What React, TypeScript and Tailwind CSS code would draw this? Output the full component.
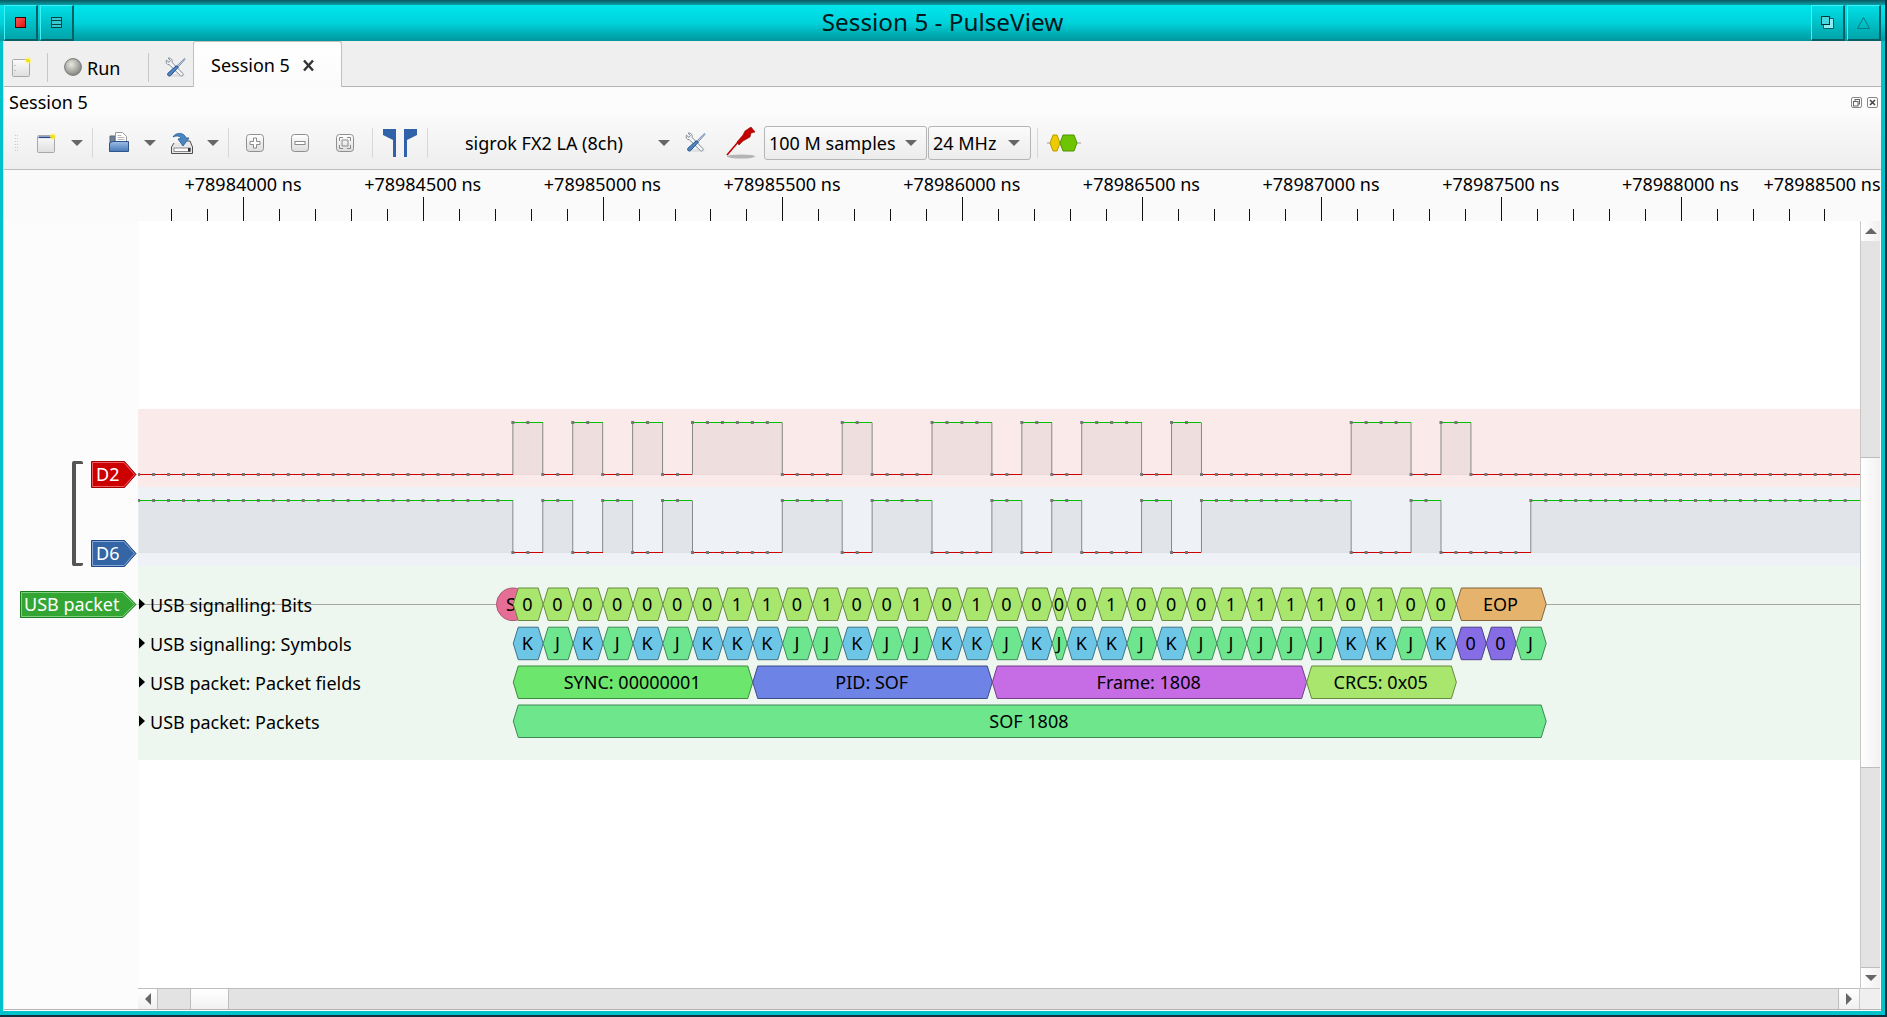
import React from "react";

// sample index -> px, one sample is 14.97px at this zoom
const sx = (k: number) => 138.6 + 14.97 * k;
const ax = (k: number) => 139 + 14.97 * k;

const d2High = [[25, 27], [29, 31], [33, 35], [37, 43], [47, 49], [53, 57], [59, 61], [63, 67], [69, 71], [81, 85], [87, 89]];
const d6High = [[0, 25], [27, 29], [31, 33], [35, 37], [43, 47], [49, 53], [57, 59], [61, 63], [67, 69], [71, 81], [85, 87], [93, 115]];

const bitValues = "000000011010010100" + "0" + "0100011110100";
const symValues = "KJKJKJKKKJJKJJKKJK" + "J" + "KKJKJJJJJKKJK";

function hex(x0: number, x1: number, top: number, h: number, d = 5) {
  const mid = top + h / 2;
  return `${x0},${mid} ${x0 + d},${top} ${x1 - d},${top} ${x1},${mid} ${x1 - d},${top + h} ${x0 + d},${top + h}`;
}

// bit cells are 2 samples wide, with one short cell at sample 61
function cells() {
  const out: [number, number][] = [];
  let k = 25;
  while (k < 61) {
    out.push([k, k + 2]);
    k += 2;
  }
  out.push([61, 62]);
  k = 62;
  while (k < 88) {
    out.push([k, k + 2]);
    k += 2;
  }
  return out;
}

function Signal({ highs, yHigh, yLow }: { highs: number[][]; yHigh: number; yLow: number }) {
  const isHigh = (k: number) => highs.some(([a, b]) => k >= a && k < b);
  const lows: number[][] = [];
  let prev = 0;
  highs.forEach(([a, b]) => {
    if (a > prev) lows.push([prev, a]);
    prev = b;
  });
  if (prev < 115) lows.push([prev, 115]);
  const samples = Array.from({ length: 115 }, (_, k) => k);
  return (
    <g>
      <line x1={138} x2={1860} y1={yLow} y2={yLow} stroke="#000" strokeOpacity={0.04} />
      {highs.map(([a, b]) => (
        <rect key={a} x={sx(a)} y={yHigh} width={sx(b) - sx(a)} height={yLow - yHigh} fill="#000" fillOpacity={0.05} />
      ))}
      {highs.flat().filter((k) => k > 0 && k < 115).map((k) => (
        <line key={k} x1={sx(k)} x2={sx(k)} y1={yHigh} y2={yLow} stroke="#888" strokeWidth={1} />
      ))}
      {lows.map(([a, b]) => (
        <line key={a} x1={sx(a)} x2={sx(b)} y1={yLow} y2={yLow} stroke="#cc0000" strokeWidth={1} shapeRendering="crispEdges" />
      ))}
      {highs.map(([a, b]) => (
        <line key={a} x1={sx(a)} x2={sx(b)} y1={yHigh} y2={yHigh} stroke="#00c000" strokeWidth={1} shapeRendering="crispEdges" />
      ))}
      {samples.map((k) => (
        <rect key={k} x={sx(k) - 1.5} y={(isHigh(k) ? yHigh : yLow) - 1.5} width={3} height={3} fill="#777" />
      ))}
    </g>
  );
}

function Cell({ x0, x1, top, fill, stroke, label, h = 32.5 }: { x0: number; x1: number; top: number; fill: string; stroke: string; label: string; h?: number }) {
  return (
    <g>
      <polygon points={hex(x0, x1, top, h)} fill={fill} stroke={stroke} strokeWidth={1} />
      <text x={(x0 + x1) / 2 - 0.8} y={top + h / 2 + 6.5} textAnchor="middle" fill="#000">
        {label}
      </text>
    </g>
  );
}

function TraceCanvas() {
  const cs = cells();
  const rows = [
    ["USB signalling: Bits", 604],
    ["USB signalling: Symbols", 643],
    ["USB packet: Packet fields", 682],
    ["USB packet: Packets", 721],
  ] as const;
  return (
    <svg className="absolute inset-0 text-[18px]" width={1722} height={767} viewBox="138 221 1722 767">
      <Signal highs={d2High} yHigh={422.5} yLow={474.5} />
      <Signal highs={d6High} yHigh={500.5} yLow={552.5} />
      <line x1={138} x2={1860} y1={604.5} y2={604.5} stroke="#a3a8a3" strokeWidth={1} />
      {rows.map(([name, y]) => (
        <g key={name}>
          <polygon points={`139,${y - 5.5} 145,${y} 139,${y + 5.5}`} fill="#000" />
          <text x={150} y={y + 7.5} fill="#000">{name}</text>
        </g>
      ))}
      <ellipse cx={513} cy={604.3} rx={16.5} ry={16.3} fill="#e66d96" stroke="#a35a74" />
      <text x={511} y={610.8} textAnchor="middle">S</text>
      {cs.map(([a, b], i) => (
        <Cell key={a} x0={ax(a)} x1={ax(b)} top={588} fill="#a8e66d" stroke="#66883f" label={bitValues[i]} />
      ))}
      <Cell x0={ax(88)} x1={ax(94)} top={588} fill="#e6b36d" stroke="#80653f" label="EOP" />
      {cs.map(([a, b], i) => (
        <Cell
          key={a}
          x0={ax(a)}
          x1={ax(b)}
          top={627.2}
          fill={symValues[i] === "K" ? "#6dc6e6" : "#6de68f"}
          stroke={symValues[i] === "K" ? "#3f7288" : "#3f8855"}
          label={symValues[i]}
        />
      ))}
      <Cell x0={ax(88)} x1={ax(90)} top={627.2} fill="#866de6" stroke="#4c3f88" label="0" />
      <Cell x0={ax(90)} x1={ax(92)} top={627.2} fill="#866de6" stroke="#4c3f88" label="0" />
      <Cell x0={ax(92)} x1={ax(94)} top={627.2} fill="#6de68f" stroke="#3f8855" label="J" />
      <Cell x0={ax(25)} x1={ax(41)} top={666} fill="#6de66d" stroke="#3f883f" label="SYNC: 00000001" />
      <Cell x0={ax(41)} x1={ax(57)} top={666} fill="#6d83e6" stroke="#3f4c88" label="PID: SOF" />
      <Cell x0={ax(57)} x1={ax(78)} top={666} fill="#c66de6" stroke="#723f88" label="Frame: 1808" />
      <Cell x0={ax(78)} x1={ax(88)} top={666} fill="#a8e66d" stroke="#66883f" label="CRC5: 0x05" />
      <Cell x0={ax(25)} x1={ax(94)} top={705} fill="#6de68c" stroke="#3f8853" label="SOF 1808" />
    </svg>
  );
}

function Ruler() {
  const majors = Array.from({ length: 10 }, (_, i) => 243 + 179.68 * i);
  const ticks = Array.from({ length: 47 }, (_, i) => 171.4 + 35.936 * i);
  const labels = ["+78984000 ns", "+78984500 ns", "+78985000 ns", "+78985500 ns", "+78986000 ns", "+78986500 ns", "+78987000 ns", "+78987500 ns", "+78988000 ns", "+78988500 ns"];
  return (
    <svg className="block text-[18px]" width={1876} height={51} viewBox="4 170 1876 51">
      {ticks.map((x, i) => {
        const big = (i - 2) % 5 === 0;
        return <line key={x} x1={Math.round(x) + 0.5} x2={Math.round(x) + 0.5} y1={big ? 197 : 209} y2={221} stroke="#111" strokeWidth={1} />;
      })}
      {majors.map((x, i) => (
        <text key={x} x={i === 9 ? 1822 : x} y={191} textAnchor="middle" fill="#000">
          {labels[i]}
        </text>
      ))}
    </svg>
  );
}

function Tag({ className, width, fill, dark, light, label, tip, textX = 5 }: { className: string; width: number; fill: string; dark: string; light: string; label: string; tip: number; textX?: number }) {
  return (
    <svg className={`absolute text-[18px] ${className}`} width={width} height={27} viewBox={`0 0 ${width} 27`}>
      <polygon points={`0.5,0.5 ${tip},0.5 ${width - 1},13.5 ${tip},26.5 0.5,26.5`} fill={fill} stroke={dark} />
      <polygon points={`1.5,1.5 ${tip - 0.5},1.5 ${width - 2.5},13.5 ${tip - 0.5},25.5 1.5,25.5`} fill="none" stroke={light} />
      <text x={textX} y={20.2} fill="#fff">{label}</text>
    </svg>
  );
}

function Caret({ className = "", up = false }: { className?: string; up?: boolean }) {
  return (
    <svg className={`shrink-0 ${className}`} width={12} height={6} viewBox="0 0 12 6">
      <polygon points={up ? "0,6 12,6 6,0" : "0,0 12,0 6,6"} fill="#666" />
    </svg>
  );
}

function Sep({ className = "" }: { className?: string }) {
  return <div className={`w-px h-[30px] bg-[#d8d8d8] shrink-0 ${className}`} />;
}

function TitleButton({ children }: { children: React.ReactNode }) {
  return (
    <div className="w-[34px] h-[36px] flex items-center justify-center border-t border-l border-[#3ff2f7] border-r-2 border-b-2 border-r-[#0a5f64] border-b-[#0a5f64] bg-gradient-to-b from-[#00dfe7] to-[#00a4aa]">
      {children}
    </div>
  );
}

function NewIcon({ strip = false }: { strip?: boolean }) {
  return (
    <svg width={20} height={20} viewBox="0 0 20 20" className="shrink-0">
      <defs>
        <linearGradient id="paper" x1="0" y1="0" x2="0" y2="1">
          <stop offset="0" stopColor="#fcfcfc" />
          <stop offset="1" stopColor="#dedede" />
        </linearGradient>
      </defs>
      <rect x="0.5" y="2.5" width="17" height="17" rx="1" fill="url(#paper)" stroke="#a8a8a8" />
      {strip ? <rect x="1.5" y="3.5" width="15" height="1.6" fill="#274a8c" /> : (
        <g fill="#999">
          <rect x="2.5" y="8" width="1" height="1" />
          <rect x="2.5" y="13" width="1" height="1" />
        </g>
      )}
      <circle cx="16" cy="3.5" r="3.2" fill="#fff45a" opacity="0.6" />
      <circle cx="16" cy="3.5" r="1.8" fill="#f5e400" />
    </svg>
  );
}

function ToolsIcon() {
  return (
    <svg width={21} height={21} viewBox="0 0 21 21" className="shrink-0">
      <ellipse cx="11" cy="18.5" rx="9" ry="1.5" fill="#000" opacity="0.08" />
      <path d="M3 1.2 L5.5 3.6 L4 5.4 L1.4 3.2 C0.6 5.4 1.6 7.8 4.4 7.8 L15.4 18.6 C16.8 19.8 19 18 17.8 16.4 L7.2 5.6 C7.8 2.6 5.6 0.4 3 1.2 Z" fill="#f4f6f8" stroke="#7f8a94" strokeWidth="1" strokeLinejoin="round" />
      <path d="M19.5 1.4 L20.2 2.2 L13 10.2 L11.8 9 Z" fill="#c6d2de" stroke="#5f7fa6" strokeWidth="0.8" />
      <path d="M11.6 8.8 L13.2 10.4 L11.8 11.8 L5.6 18.6 C4.4 20 1.6 18 2.8 16.4 L9.8 10 Z" fill="#4f83c2" stroke="#1f4f8c" strokeWidth="1" strokeLinejoin="round" />
    </svg>
  );
}

function RoundBtnIcon({ kind }: { kind: "plus" | "minus" | "fit" }) {
  return (
    <svg width={18} height={18} viewBox="0 0 18 18" className="shrink-0">
      <defs>
        <linearGradient id="btnface" x1="0" y1="0" x2="0" y2="1">
          <stop offset="0" stopColor="#ffffff" />
          <stop offset="1" stopColor="#dcdcdc" />
        </linearGradient>
      </defs>
      <rect x="0.5" y="0.5" width="17" height="17" rx="3" fill="url(#btnface)" stroke="#8f8f8f" />
      {kind === "plus" && <path d="M7.5 4 H10.5 V7.5 H14 V10.5 H10.5 V14 H7.5 V10.5 H4 V7.5 H7.5 Z" fill="#fff" stroke="#8a8a8a" />}
      {kind === "minus" && <rect x="4" y="7.5" width="10" height="3" fill="#fff" stroke="#8a8a8a" />}
      {kind === "fit" && <path d="M3.5 7 V3.5 H7 M11 3.5 H14.5 V7 M14.5 11 V14.5 H11 M7 14.5 H3.5 V11 M6 6 H12 V12 H6 Z" fill="none" stroke="#8a8a8a" strokeWidth="1" />}
    </svg>
  );
}

function FolderIcon() {
  return (
    <svg width={20} height={21} viewBox="0 0 20 21" className="shrink-0">
      <defs>
        <linearGradient id="folder" x1="0" y1="0" x2="0" y2="1">
          <stop offset="0" stopColor="#9dbde6" />
          <stop offset="1" stopColor="#4678b8" />
        </linearGradient>
      </defs>
      <path d="M1 4 H6 V18 H1 Z" fill="#6f8096" stroke="#55657c" />
      <path d="M6.5 .5 H13.5 L17.5 4.5 V11 H6.5 Z" fill="#fff" stroke="#9a9a9a" />
      <path d="M8.5 3.5 H12.5 M8.5 5.5 H15.5 M8.5 7.5 H15.5" stroke="#b8b8b8" strokeWidth="1" />
      <path d="M4 9.5 H19.5 V19.5 H.5 V11 Z" fill="url(#folder)" stroke="#2f5488" />
    </svg>
  );
}

function SaveIcon() {
  return (
    <svg width={22} height={22} viewBox="0 0 22 22" className="shrink-0">
      <path d="M3 11 L.5 15 V21.5 H21.5 V15 L19 9 H16" fill="#e8e8e8" stroke="#4e4e4e" />
      <rect x="3" y="16" width="16" height="3.5" fill="#fff" stroke="#8a8a8a" />
      <rect x="17" y="16" width="2.5" height="3.5" fill="#333" />
      <path d="M2 5 C4 .5 13 -.5 15 6 L18 6 L12 14 L7 7 L10 6.5 C9 3.5 5 3.5 2 5 Z" fill="#4b86c4" stroke="#23598f" strokeWidth="0.8" />
    </svg>
  );
}

function CursorIcon() {
  return (
    <svg width={34} height={28} viewBox="0 0 34 28" className="shrink-0">
      <path d="M0 0 H13 V28 H10 V11 L0 6 Z" fill="#2f62a8" />
      <path d="M21 0 H34 V6 L24 11 V28 H21 Z" fill="#2f62a8" />
    </svg>
  );
}

function ProbeIcon() {
  return (
    <svg width={30} height={32} viewBox="0 0 30 32" className="shrink-0">
      <ellipse cx="15" cy="29.5" rx="14" ry="2" fill="#000" opacity="0.25" />
      <path d="M1 28 L13 14" stroke="#c00000" strokeWidth="1.6" />
      <path d="M11 15 L17 8 L19 4 L25 0 L29 5 L25 6 L24 10 L17 14 L13 18 Z" fill="#c40000" stroke="#8f0000" strokeWidth="0.6" />
    </svg>
  );
}

function DecoderIcon() {
  return (
    <svg width={34} height={18} viewBox="0 0 34 18" className="shrink-0">
      <line x1="0" x2="34" y1="9" y2="9" stroke="#9a9a9a" />
      <polygon points="3,9 6,1 10,1 13,9 10,17 6,17" fill="#eccc00" stroke="#b89c00" />
      <polygon points="13,9 16,1 27,1 30,9 27,17 16,17" fill="#6ec400" stroke="#4e9400" />
    </svg>
  );
}

export default function App() {
  return (
    <div className="w-[1887px] h-[1017px] bg-[#12303f] overflow-hidden font-['Noto_Sans',sans-serif] text-[18px] text-black">
      <div className="w-[1885px] h-[1015px] bg-[#00c2ca] flex flex-col">
        {/* title bar */}
        <div className="h-[41px] flex flex-col shrink-0">
          <div className="h-[5px] bg-gradient-to-b from-[#0a5a60] to-[#0aa0a8]" />
          <div className="flex-1 flex items-center justify-between pl-[4px] pr-[4px] bg-gradient-to-b from-[#00e6ee] via-[#00d2da] to-[#00979d]">
            <div className="flex gap-[2px] self-stretch items-start">
              <TitleButton>
                <div className="w-[11px] h-[11px] border border-[#300] bg-gradient-to-br from-[#ff5050] to-[#e00000]" />
              </TitleButton>
              <TitleButton>
                <div className="w-[11px] h-[11px] border border-[#044] flex flex-col justify-evenly bg-[#39c8d0]">
                  <div className="h-px bg-[#044]" />
                  <div className="h-px bg-[#044]" />
                </div>
              </TitleButton>
            </div>
            <div className="text-[24.3px] leading-none text-[#00181c] pb-[2px]">Session 5 - PulseView</div>
            <div className="flex gap-[2px] self-stretch items-start">
              <TitleButton>
                <svg width={13} height={14} viewBox="0 0 13 14">
                  <path d="M8.5 2.5 H12.5 V12.5 H2.5 V8.5" fill="#8ceef2" stroke="#066" />
                  <rect x="0.5" y="0.5" width="8" height="8" fill="#44d8df" stroke="#033" />
                </svg>
              </TitleButton>
              <TitleButton>
                <svg width={13} height={12} viewBox="0 0 13 12">
                  <polygon points="6.5,0.5 12.5,11.5 0.5,11.5" fill="none" stroke="#067d84" />
                </svg>
              </TitleButton>
            </div>
          </div>
        </div>

        <div className="flex-1 min-h-0 ml-[3px] mr-[4px] mb-[4px] border-l border-[#e0e0e0] bg-white flex flex-col">
          {/* tab bar */}
          <div className="h-[46px] shrink-0 flex bg-[#efefef] border-b border-[#b4b4b4]">
            <div className="w-[189px] flex items-center pt-[7px] shrink-0">
              <div className="ml-[8px]"><NewIcon /></div>
              <div className="ml-[15px] w-px h-[29px] bg-[#c8c8c8]" />
              <svg className="ml-[16px] shrink-0" width={18} height={18} viewBox="0 0 18 18">
                <defs>
                  <radialGradient id="runball" cx="0.4" cy="0.35" r="0.7">
                    <stop offset="0" stopColor="#e8e8e0" />
                    <stop offset="1" stopColor="#7e807a" />
                  </radialGradient>
                </defs>
                <circle cx="9" cy="9" r="8.4" fill="url(#runball)" stroke="#777" />
              </svg>
              <span className="ml-[5px] mt-[2px]">Run</span>
              <div className="ml-[28px] w-px h-[29px] bg-[#c8c8c8]" />
              <div className="ml-[16px]"><ToolsIcon /></div>
            </div>
            <div className="w-[149px] h-[46px] shrink-0 flex items-start pt-[10px] pl-[17px] rounded-t-[3px] border-t border-l border-r border-[#c0c0c0] bg-gradient-to-b from-white to-[#fbfbfb] relative z-10">
              <span>Session 5</span>
              <svg className="ml-[12px] mt-[7px]" width={13} height={13} viewBox="0 0 13 13">
                <path d="M2 1.5 L11 11.5 M11 1.5 L2 11.5" stroke="#333" strokeWidth="2.4" />
              </svg>
            </div>
          </div>

          {/* dock header */}
          <div className="h-[29px] shrink-0 flex items-center justify-between pl-[5px] pr-[3px] bg-[#fcfcfc]">
            <span className="mt-[2px]">Session 5</span>
            <div className="flex gap-[5px] pt-[1px]">
              <svg width={11} height={11} viewBox="0 0 11 11">
                <rect x="0.5" y="0.5" width="10" height="10" rx="1.5" fill="none" stroke="#888" />
                <rect x="4" y="2.5" width="4.5" height="4.5" fill="none" stroke="#666" />
                <rect x="2.5" y="4.5" width="4.5" height="4.5" fill="#fcfcfc" stroke="#666" />
              </svg>
              <svg width={11} height={11} viewBox="0 0 11 11">
                <rect x="0.5" y="0.5" width="10" height="10" rx="1.5" fill="none" stroke="#888" />
                <path d="M3 3 L8 8 M8 3 L3 8" stroke="#444" strokeWidth="1.6" />
              </svg>
            </div>
          </div>

          {/* toolbar */}
          <div className="h-[54px] shrink-0 flex items-center border-b border-[#bdbdbd] bg-gradient-to-b from-[#fafafa] to-[#eeeeee]">
            <div className="ml-[10px] w-[4px] h-[18px] shrink-0 bg-[radial-gradient(circle,#bbbbbb_0.6px,transparent_0.8px)] bg-[length:2.5px_3px]" />
            <div className="ml-[19px]"><NewIcon strip /></div>
            <Caret className="ml-[14px]" />
            <Sep className="ml-[9px]" />
            <div className="ml-[16px]"><FolderIcon /></div>
            <Caret className="ml-[15px]" />
            <div className="ml-[15px]"><SaveIcon /></div>
            <Caret className="ml-[14px]" />
            <Sep className="ml-[9px]" />
            <div className="ml-[17px]"><RoundBtnIcon kind="plus" /></div>
            <div className="ml-[27px]"><RoundBtnIcon kind="minus" /></div>
            <div className="ml-[27px]"><RoundBtnIcon kind="fit" /></div>
            <Sep className="ml-[18px]" />
            <div className="ml-[10px]"><CursorIcon /></div>
            <Sep className="ml-[10px]" />
            <div className="ml-[37px] mt-[2px] w-[158px] shrink-0 whitespace-nowrap">sigrok FX2 LA (8ch)</div>
            <Caret className="ml-[35px]" />
            <div className="ml-[15px]"><ToolsIcon /></div>
            <div className="ml-[20px]"><ProbeIcon /></div>
            <div className="ml-[8px] w-[163px] h-[34px] shrink-0 flex items-center justify-between pl-[4px] pr-[9px] rounded-[3px] border border-[#b5b5b5] bg-gradient-to-b from-[#fbfbfb] to-[#ececec]">
              <span className="mt-[2px]">100 M samples</span>
              <Caret />
            </div>
            <div className="ml-[1px] w-[103px] h-[34px] shrink-0 flex items-center justify-between pl-[4px] pr-[10px] rounded-[3px] border border-[#b5b5b5] bg-gradient-to-b from-[#fbfbfb] to-[#ececec]">
              <span className="mt-[2px]">24 MHz</span>
              <Caret />
            </div>
            <Sep className="ml-[6px]" />
            <div className="ml-[9px]"><DecoderIcon /></div>
          </div>

          {/* time ruler */}
          <div className="h-[51px] shrink-0 bg-[#fafafa]">
            <Ruler />
          </div>

          {/* traces */}
          <div className="h-[767px] shrink-0 flex">
            <div className="w-[134px] shrink-0 bg-[#fcfcfc] relative">
              <div className="absolute left-[68px] top-[240px] w-[11px] h-[105px] border-l-4 border-t-[3px] border-b-[3px] border-[#555555] rounded-[2px]" />
              <Tag className="left-[87px] top-[240px]" width={46} tip={33.5} fill="#cc0000" dark="#a40000" light="#ee6060" label="D2" />
              <Tag className="left-[87px] top-[319px]" width={46} tip={33.5} fill="#3465a4" dark="#204a87" light="#85a8d8" label="D6" />
              <Tag className="left-[16px] top-[370px]" width={117} tip={103} textX={4} fill="#33a532" dark="#1e7a1e" light="#7fd07f" label="USB packet" />
            </div>
            <div className="w-[1722px] shrink-0 relative flex flex-col bg-white">
              <div className="h-[188px]" />
              <div className="h-[78px] bg-[#fbeaea]" />
              <div className="h-[79px] bg-[#eef1f6]" />
              <div className="h-[194px] bg-[#eef7ef]" />
              <TraceCanvas />
            </div>
            <div className="w-[20px] shrink-0 flex flex-col border-l border-[#c8c8c8]">
              <div className="h-[20px] flex items-center justify-center bg-gradient-to-r from-white to-[#f0f0f0]"><Caret up /></div>
              <div className="h-[216px] bg-[#e3e3e3]" />
              <div className="h-[311px] border-y border-[#bdbdbd] bg-gradient-to-r from-white to-[#f1f1f1]" />
              <div className="h-[199px] bg-[#e3e3e3]" />
              <div className="h-[21px] flex items-center justify-center border-t border-[#bdbdbd] bg-gradient-to-r from-white to-[#f0f0f0]"><Caret /></div>
            </div>
          </div>

          {/* horizontal scrollbar */}
          <div className="h-[21px] shrink-0 flex">
            <div className="w-[134px] shrink-0 bg-[#fcfcfc]" />
            <div className="w-[20px] shrink-0 flex items-center justify-center border-t border-r border-[#bdbdbd] bg-gradient-to-b from-white to-[#f0f0f0]">
              <svg width={6} height={12} viewBox="0 0 6 12"><polygon points="6,0 6,12 0,6" fill="#666" /></svg>
            </div>
            <div className="w-[32px] shrink-0 border-t border-[#bdbdbd] bg-[#e3e3e3]" />
            <div className="w-[39px] shrink-0 border-t border-x border-[#bdbdbd] bg-gradient-to-b from-white to-[#f1f1f1]" />
            <div className="w-[1609px] shrink-0 border-t border-[#bdbdbd] bg-[#e3e3e3]" />
            <div className="w-[21px] shrink-0 flex items-center justify-center border-t border-l border-[#bdbdbd] bg-gradient-to-b from-white to-[#f0f0f0]">
              <svg width={6} height={12} viewBox="0 0 6 12"><polygon points="0,0 0,12 6,6" fill="#666" /></svg>
            </div>
            <div className="w-[21px] shrink-0 border-t border-l border-[#c8c8c8] bg-[#efefef]" />
          </div>
          <div className="flex-1 border-t border-[#b4b4b4] bg-white" />
        </div>
      </div>
    </div>
  );
}
